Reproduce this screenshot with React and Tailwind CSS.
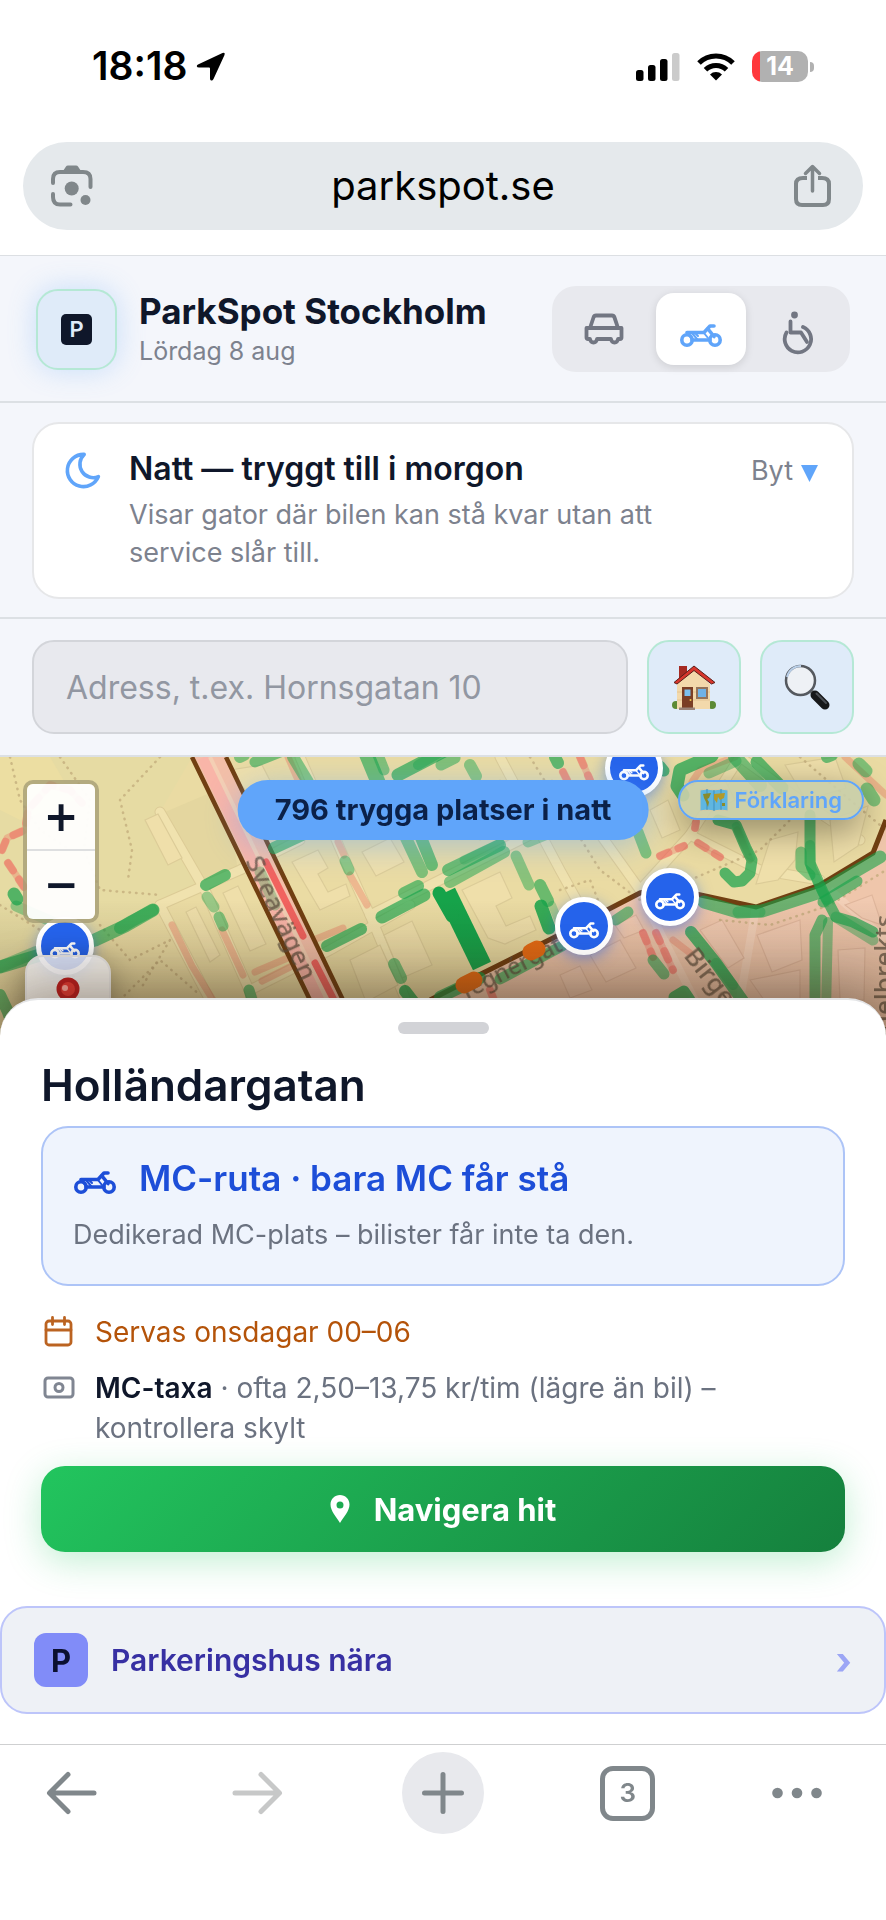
import React from "react";

const GREEN = [
  // [points, width, opacity]
  ["0,967 50,952 95,940 125,926 153,910", 13, 0.6],
  ["0,967 36,952", 12, 0.4],
  ["120,928 132,921 153,910", 12, 0.5],
  ["14,894 17,899", 13, 0.7],
  ["16,906 32,913 60,925", 11, 0.4],
  ["0,995 8,1012 14,1030", 12, 0.6],
  ["206,885 225,875", 12, 0.65],
  ["207,897 214,907", 11, 0.4],
  ["219,917 223,926", 11, 0.5],
  ["260,872 275,905", 11, 0.3],
  ["274,848 302,835", 12, 0.6],
  ["345,861 349,870", 11, 0.45],
  ["293,757 308,782", 12, 0.5],
  ["240,757 244,755", 12, 0.5],
  ["255,762 285,750", 11, 0.55],
  ["366,753 378,782", 15, 0.6],
  ["376,750 384,770", 11, 0.5],
  ["398,775 450,748", 13, 0.65],
  ["418,765 458,742", 10, 0.4],
  ["406,838 422,872", 12, 0.5],
  ["420,835 432,865", 12, 0.6],
  ["404,893 418,886", 12, 0.6],
  ["382,917 424,895", 13, 0.65],
  ["327,946 361,929", 12, 0.65],
  ["394,964 401,978", 12, 0.55],
  ["405,991 415,1004", 12, 0.8],
  ["249,990 252,1000", 11, 0.6],
  ["448,870 500,845", 12, 0.6],
  ["464,860 500,843", 9, 0.3],
  ["450,882 504,852", 12, 0.5],
  ["516,856 529,885", 11, 0.45],
  ["540,885 548,901", 12, 0.6],
  ["541,906 549,928", 13, 0.85],
  ["552,905 560,925", 8, 0.3],
  ["441,765 455,758", 11, 0.5],
  ["470,765 476,776", 12, 0.45],
  ["528,842 545,835", 11, 0.4],
  ["555,757 558,763", 12, 0.65],
  ["616,920 628,912", 11, 0.55],
  ["638,832 646,853", 11, 0.5],
  ["660,766 664,771", 11, 0.7],
  ["683,795 677,786 680,770 712,756", 13, 0.7],
  ["709,773 736,761", 11, 0.4],
  ["735,757 760,785", 14, 0.55],
  ["757,762 782,788", 13, 0.65],
  ["827,757 832,755", 12, 0.6],
  ["859,764 866,771", 13, 0.5],
  ["867,789 874,800", 13, 0.5],
  ["718,820 736,825 746,848 752,860 750,873 742,881 734,882 725,873", 11, 0.7],
  ["736,826 751,858", 8, 0.25],
  ["810,815 810,863 823,892 836,917 853,922 873,932", 11, 0.65],
  ["810,845 811,868 826,900", 10, 0.35],
  ["801,852 801,867 810,875", 11, 0.5],
  ["704,902 738,912 762,911 820,892 880,857", 13, 0.6],
  ["738,912 760,912", 11, 0.4],
  ["823,902 857,881", 11, 0.6],
  ["836,917 873,940", 11, 0.4],
  ["822,920 815,935 815,1010", 11, 0.6],
  ["828,922 826,1010", 10, 0.45],
  ["691,932 716,963 745,1004", 12, 0.7],
  ["716,963 733,985", 10, 0.3],
  ["653,960 664,974", 11, 0.55],
  ["674,997 684,991 690,1000", 11, 0.75],
  ["500,979 562,946", 11, 0.6],
  ["440,997 480,978", 12, 0.7],
];

const RED = [
  "24,887 8,863",
  "2,850 7,838 25,830 28,810 50,785 70,790 82,803",
  "695,828 696,822",
  "660,856 684,846",
  "698,843 720,857",
  "643,933 653,957",
  "656,933 673,970",
  "490,990 494,1000",
  "580,757 590,780",
  "563,772 568,782",
];

const SALMON = [
  "172,925 192,966 213,1000",
  "222,930 243,975",
  "338,842 344,855",
  "350,875 367,905",
  "255,972 290,957",
  "262,981 290,967",
  "316,939 343,928",
  "288,757 298,780",
  "692,782 700,770 735,757",
  "673,940 690,953",
  "737,830 750,860",
  "845,757 886,795",
];

const PALE_ROADS = [
  "160,812 205,890 250,992 256,1010",
  "160,905 240,870 300,840",
  "160,905 215,1010",
  "300,757 345,860 370,915 410,1010",
  "370,915 440,880 560,820",
  "250,990 330,950 410,905",
  "500,757 560,870 610,960",
  "590,820 640,890",
  "640,890 690,835 740,757",
  "690,835 760,870 820,880",
  "740,757 800,800 860,840",
];

const BUILDINGS = [
  "145,820 158,814 182,858 168,865",
  "186,912 196,907 220,955 210,962",
  "223,893 238,886 266,944 250,951",
  "292,862 318,850 328,868 318,874 328,892 346,884 350,896 320,910",
  "362,852 390,838 404,862 376,876",
  "350,960 380,945 398,985 366,1002",
  "384,935 412,921 432,965 402,978",
  "462,890 500,872 512,898 496,906 506,926 530,916 536,930 505,944 488,938",
  "460,800 500,780 520,822 480,840",
  "400,795 440,780 452,802 415,820",
  "530,790 552,780 570,830 555,838",
  "650,810 668,800 680,830 662,838",
  "700,790 725,780 735,800 712,812",
  "770,840 798,832 795,860 778,880 756,884",
  "830,820 868,806 858,846 834,862",
  "785,765 835,757 846,788 806,800",
  "230,770 262,765 280,800 262,812",
];

const PINK_BUILDINGS = [
  "590,955 620,940 636,968 606,982",
  "560,975 580,966 592,990 570,998",
  "615,925 636,915 644,930 624,938",
  "700,930 722,920 744,958 728,968",
  "757,935 800,920 802,960 772,972",
  "750,980 800,970 800,1000 764,1000",
  "845,905 872,895 882,925 862,918",
  "838,950 865,948 864,1000 840,1000",
];

const DOTS = [
  "10,757 20,800 40,830 70,850",
  "60,757 90,800 84,850 100,890 160,895",
  "160,757 120,800 132,850 128,880",
  "100,925 130,960 170,940 140,990",
  "120,1000 160,960 200,995",
  "0,905 40,930 80,985",
  "530,757 600,870 640,900",
  "560,890 590,880 600,905",
  "720,920 770,925 830,905 886,870",
  "690,880 760,850 790,820",
  "800,757 850,800 886,830",
];

const lines = (list, props) =>
  list.map((p) => (
    <polyline key={p} points={p} fill="none" strokeLinecap="round" strokeLinejoin="round" {...props} />
  ));

function StreetMap() {
  return (
    <svg
      className="absolute inset-0 size-full"
      viewBox="0 757 886 290"
      preserveAspectRatio="xMidYMin slice"
      aria-hidden="true"
      fontFamily="Noto Sans, sans-serif"
    >
      <defs>
        <linearGradient id="edge" x1="0" y1="900" x2="0" y2="1010" gradientUnits="userSpaceOnUse">
          <stop offset="0" stopColor="#2a1a08" stopOpacity="0" />
          <stop offset="1" stopColor="#2a1a08" stopOpacity="0.24" />
        </linearGradient>
      </defs>
      <rect x="0" y="757" width="886" height="290" fill="#eadba3" />
      <path d="M0 757H192L160 812L205 890L160 905L120 925L0 975Z" fill="#e6dba3" />
      <path d="M0 757H50L75 800L20 820L0 810Z" fill="#ecdea2" />
      <path d="M165 812L200 890L238 872L226 790L205 795Z" fill="#e4d69f" />
      {lines(PALE_ROADS, { stroke: "#dccb96", strokeWidth: 11 })}
      {lines(PALE_ROADS, { stroke: "#f0e2ae", strokeWidth: 9 })}
      {BUILDINGS.map((p) => (
        <polygon key={p} points={p} fill="#efdfaa" stroke="#dccc98" strokeWidth="1.2" />
      ))}
      <path
        d="M430 1000L483 973L553 938L640 893L670 887L696 894L756 907L820 885L873 853L886 820V1047H430Z"
        fill="#efc6ab"
      />
      <path d="M640 893L700 1010M756 907L740 1000M830 890L886 940" stroke="#f3d0b8" strokeWidth="8" fill="none" />
      {PINK_BUILDINGS.map((p) => (
        <polygon key={p} points={p} fill="#f1cab1" stroke="#e0b79d" strokeWidth="1.2" />
      ))}
      {lines(DOTS, { stroke: "#bfa877", strokeWidth: 2.5, strokeDasharray: "0.5 6", opacity: 0.7 })}
      <path d="M192 757L226 757L342 998L360 1040H330L309 998Z" fill="#f3bfa8" />
      <path d="M204 757L322 1002" stroke="#f9b5a8" strokeWidth="14" fill="none" />
      <path d="M210 757L330 1006" stroke="#f4cfb4" strokeWidth="4" fill="none" />
      {lines(SALMON, { stroke: "#e8866a", strokeWidth: 7, opacity: 0.45 })}
      {lines(RED, { stroke: "#ef5f58", strokeWidth: 8, strokeDasharray: "9 11", opacity: 0.45 })}
      {lines(RED, { stroke: "#ef5f58", strokeWidth: 7, opacity: 0.3 })}
      {lines(["266,862 303,936", "315,963 336,1004"], { stroke: "#f05252", strokeWidth: 7, opacity: 0.85 })}
      <path d="M192 757L309 998L320 1020M226 757L342 998L352 1020" stroke="#713f12" strokeWidth="4.5" fill="none" />
      <path
        d="M430 1000L483 973L553 938L640 893L670 887L696 894L756 907L820 885L873 853L886 820"
        stroke="#713f12"
        strokeWidth="5"
        fill="none"
      />
      {GREEN.map(([p, w, o]) => (
        <polyline
          key={p}
          points={p}
          fill="none"
          stroke="#16a34a"
          strokeWidth={w}
          opacity={o}
          strokeLinecap="round"
          strokeLinejoin="round"
        />
      ))}
      <g fill="#5f5040" fontSize="26" fontWeight="500" opacity="0.75">
        <text transform="translate(245 861) rotate(65)">Sveavägen</text>
        <text transform="translate(464 1001) rotate(-27)" fontSize="23">Tegnérgat</text>
        <text transform="translate(683 956) rotate(52)">Birger</text>
        <text transform="translate(893 1062) rotate(-90)">Engelbrekts</text>
      </g>
      <path d="M446 892L482 966" stroke="#16a34a" strokeWidth="20" strokeLinejoin="round" />
      <path d="M439 893L452 916" stroke="#16a34a" strokeWidth="13" strokeLinecap="round" />
      <path d="M531 952L537 949M464 985L474 980" stroke="#ea6c14" strokeWidth="17" strokeLinecap="round" />
      <rect x="0" y="900" width="886" height="147" fill="url(#edge)" />
    </svg>
  );
}

function MotoIcon({ className }) {
  return (
    <svg
      className={className}
      viewBox="0 0 42 24"
      fill="none"
      stroke="currentColor"
      strokeWidth="3.6"
      strokeLinecap="round"
      strokeLinejoin="round"
      aria-hidden="true"
    >
      <circle cx="7" cy="17" r="5.2" />
      <circle cx="35" cy="17" r="5.2" />
      <path d="M7 9.500H24L30 3H34" />
      <path d="M28 6L34 13.500" />
      <path d="M12 17H30" />
      <path d="M7 9.500L12 16" strokeWidth="2.500" />
      <path d="M12 10L17 16M15 10L18 13M24 10L28 15" strokeWidth="2" />
    </svg>
  );
}

function CarIcon() {
  return (
    <svg
      className="h-8 w-10"
      viewBox="0 0 40 32"
      fill="none"
      stroke="currentColor"
      strokeWidth="3.8"
      strokeLinejoin="round"
      strokeLinecap="round"
      aria-hidden="true"
    >
      <path d="M6 15L9.500 4.500Q10.200 2.500 12 2.500H28Q29.800 2.500 30.500 4.500L34 15" />
      <path d="M2.500 15H37.500V24.500Q37.500 26 36 26H34Q33.500 29.500 30.500 29.500Q27.500 29.500 27 26H13Q12.500 29.500 9.500 29.500Q6.500 29.500 6 26H4Q2.500 26 2.500 24.500Z" />
    </svg>
  );
}

function WheelchairIcon() {
  return (
    <svg
      className="h-11 w-8"
      viewBox="0 0 32 44"
      fill="none"
      stroke="currentColor"
      strokeWidth="3.8"
      strokeLinecap="round"
      strokeLinejoin="round"
      aria-hidden="true"
    >
      <circle cx="12.500" cy="4" r="3.400" fill="currentColor" stroke="none" />
      <path d="M8.500 10.500V21.500H19L25 31" />
      <path d="M4.500 21.500A13.200 13.200 0 1 0 21 16" />
    </svg>
  );
}

function MoonIcon() {
  return (
    <svg
      className="size-[43px] shrink-0 text-[#60a5fa]"
      viewBox="0 0 24 24"
      fill="none"
      stroke="currentColor"
      strokeWidth="2"
      strokeLinecap="round"
      strokeLinejoin="round"
      aria-hidden="true"
    >
      <path d="M12 3c.132 0 .263 0 .393 0a7.500 7.500 0 0 0 7.920 12.446a9 9 0 1 1 -8.313 -12.454z" />
    </svg>
  );
}

function HouseIcon() {
  return (
    <svg className="h-[46px] w-11" viewBox="0 0 44 46" aria-hidden="true">
      <circle cx="4" cy="41" r="4" fill="#5c8a35" />
      <circle cx="40" cy="41" r="4" fill="#5c8a35" />
      <path d="M7 2H15V12L7 18Z" fill="#a52a22" />
      <path d="M5 20L22 5L38 20V45H5Z" fill="#f3d9ab" />
      <path d="M5 28H38M5 36H38" stroke="#e4c493" strokeWidth="1" />
      <path d="M2 18.500L22 2L43 18.500L39.500 20L22 6.500L5 20Z" fill="#d8362c" stroke="#5b1d18" strokeWidth="1" />
      <path d="M10 23H21V44H10Z" fill="#7b3f25" />
      <path d="M12.500 25.500H18.500V32H12.500Z" fill="#7cc0ee" />
      <circle cx="18.500" cy="36" r="1" fill="#f2c94c" />
      <path d="M25 24H35V34H25Z" fill="#6fb2e6" stroke="#94745a" strokeWidth="2" />
      <path d="M7 43.500H23V46H7Z" fill="#9a8478" />
    </svg>
  );
}

function MagnifierIcon() {
  return (
    <svg className="size-[46px]" viewBox="0 0 46 46" aria-hidden="true">
      <path d="M26 26L32 32" stroke="#8c8f94" strokeWidth="4" />
      <path d="M31 31L41 41" stroke="#17181a" strokeWidth="9" strokeLinecap="round" />
      <path d="M32.500 29.500L42 39" stroke="#4b4e53" strokeWidth="2" strokeLinecap="round" />
      <circle cx="16.500" cy="16.500" r="14.500" fill="#eef1f5" stroke="#55595f" strokeWidth="2.500" />
      <path d="M3 13A14 14 0 0 1 17 2" stroke="#b9cfe8" strokeWidth="2" fill="none" />
    </svg>
  );
}

function WorldMapIcon() {
  return (
    <svg className="h-6 w-7" viewBox="0 0 28 24" aria-hidden="true">
      <path d="M0 2L7 1L14 2L21 1L28 2V23L21 22L14 23L7 22L0 23Z" fill="#5fb6e0" stroke="#d9c9a0" strokeWidth="1" />
      <path d="M7 1V22M14 2V23M21 1V22" stroke="#3f8fbd" strokeWidth="1" />
      <path d="M3 6L11 5L9 10L7 11L9 14L8 19L6 14L4 10Z" fill="#8a8b2c" />
      <path d="M14 6L25 5L24 10L20 12L18 9L17 15L14 11Z" fill="#b39a2a" />
      <path d="M22 15H25V18H22Z" fill="#8a8b2c" />
    </svg>
  );
}

function Marker({ className }) {
  return (
    <div
      className={`absolute flex size-[58px] items-center justify-center rounded-full border-5 border-white bg-[#2563eb] pt-2 text-white shadow-[0_4px_14px_rgba(37,99,235,0.5)] ${className}`}
    >
      <MotoIcon className="h-[18px] w-[30px]" />
    </div>
  );
}

function StatusBar() {
  return (
    <div className="flex h-[142px] items-start justify-between pt-[43px] pr-[72px] pl-[92px]">
      <div className="flex items-center gap-2">
        <span className="text-[39px] leading-[46px] font-semibold text-black">18:18</span>
        <svg className="size-8" viewBox="0 0 32 32" aria-hidden="true">
          <path
            d="M3 14.500L27.500 3Q30.500 2 29.500 5L18.500 29Q17.500 31 16 30.500Q15 30 15 28.500V18.500Q15 17.500 14 17.500H4Q2 17.500 1.800 16.300Q1.700 15.200 3 14.500Z"
            fill="#000"
          />
        </svg>
      </div>
      <div className="flex items-center gap-[17px] pt-2">
        <svg className="h-7 w-[44px]" viewBox="0 0 44 28" aria-hidden="true">
          <rect x="0" y="17" width="7.500" height="11" rx="2.500" />
          <rect x="12" y="12" width="7.500" height="16" rx="2.500" />
          <rect x="24" y="6" width="7.500" height="22" rx="2.500" />
          <rect x="36" y="0" width="7.500" height="28" rx="2.500" fill="#cbcbcb" />
        </svg>
        <svg className="h-7 w-[38px]" viewBox="0 0 38 28" aria-hidden="true" fill="none" stroke="#000" strokeWidth="5">
          <path d="M2 10A24 24 0 0 1 36 10" />
          <path d="M8.500 16.800A15 15 0 0 1 29.500 16.800" />
          <path d="M19 27.500L13 21.500A8.500 8.500 0 0 1 25 21.500Z" fill="#000" stroke="none" />
        </svg>
        <div className="flex items-center gap-[2px]">
          <div className="flex h-[31px] w-[56px] items-center justify-center rounded-[10px] bg-[linear-gradient(90deg,#ff383c_8px,#b1b1b1_8px)] text-[25px] leading-none font-bold text-white">
            14
          </div>
          <div className="h-[10px] w-1 rounded-r-full bg-[#b1b1b1]" />
        </div>
      </div>
    </div>
  );
}

function AddressBar() {
  return (
    <div className="border-b border-[#dcdfe3] px-[23px] pb-[25px]">
      <div className="flex h-[88px] items-center justify-between rounded-full bg-[#e5e9ec] px-7 text-[#80878a]">
        <button type="button" aria-label="Sök med kameran">
          <svg className="size-[42px]" viewBox="0 0 42 42" fill="none" stroke="currentColor" strokeWidth="4" strokeLinecap="round" aria-hidden="true">
            <path d="M2 18V14Q2 7 9 7H32Q39.500 7 39.500 14V22" />
            <path d="M2 29V32Q2 39.500 9 39.500H19.500" />
            <path d="M12 6L15 1.500Q15.500 .500 17 .500H25Q26.500 .500 27 1.500L30 6V8H12Z" fill="currentColor" stroke="none" />
            <circle cx="20.700" cy="23.500" r="7" fill="currentColor" stroke="none" />
            <circle cx="34.500" cy="35" r="5" fill="currentColor" stroke="none" />
          </svg>
        </button>
        <span className="text-[40px] leading-[48px] text-black">parkspot.se</span>
        <button type="button" aria-label="Dela">
          <svg className="h-[44px] w-[42px]" viewBox="0 0 42 44" fill="none" stroke="currentColor" strokeWidth="4" strokeLinejoin="round" aria-hidden="true">
            <path d="M14 14H10Q3 14 3 20V35Q3 41 9 41H30Q36 41 36 35V20Q36 14 29 14H25" />
            <path d="M19.500 27V4M12.500 9.500L19.500 2.500L26.500 9.500" strokeWidth="3.500" strokeLinecap="round" />
          </svg>
        </button>
      </div>
    </div>
  );
}

function AppHeader() {
  const tab = "flex h-[72px] w-[90px] items-center justify-center rounded-[18px]";
  return (
    <header className="flex items-center justify-between border-b-2 border-[#dce0e4] px-9 pt-[30px] pb-[29px]">
      <div className="flex items-center gap-[22px]">
        <div className="flex size-[81px] items-center justify-center rounded-[22px] border-2 border-[#b5e8d5] bg-[#dfebf9] shadow-[0_0_28px_rgba(96,165,250,0.3)]">
          <span className="flex size-[31px] items-center justify-center rounded-[5px] bg-[#0f172a] text-[22px] leading-none font-semibold text-[#dfebf9]">
            P
          </span>
        </div>
        <div>
          <h1 className="text-[35px] leading-[44px] font-bold text-[#0f172a]">ParkSpot Stockholm</h1>
          <p className="text-[25px] leading-[36px] text-[#7d828e]">Lördag 8 aug</p>
        </div>
      </div>
      <div className="flex gap-[7px] rounded-3xl bg-[#e8e9ee] p-[7px] text-[#727682]">
        <button type="button" aria-label="Bil" className={tab}>
          <CarIcon />
        </button>
        <button
          type="button"
          aria-label="MC"
          aria-pressed="true"
          className="flex h-[72px] w-[90px] items-center justify-center rounded-[18px] bg-white pt-3 text-[#60a5fa] shadow-[0_2px_8px_rgba(0,0,0,0.12)]"
        >
          <MotoIcon className="h-6 w-[42px]" />
        </button>
        <button type="button" aria-label="Rörelsehindrad" className="flex h-[72px] w-[90px] items-center justify-center rounded-[18px] pt-2">
          <WheelchairIcon />
        </button>
      </div>
    </header>
  );
}

function ModeCard() {
  return (
    <section className="border-b-2 border-[#dce0e4] px-8 pt-[19px] pb-[18px]">
      <button
        type="button"
        className="flex w-full items-start gap-6 rounded-[27px] border-2 border-[#e6e7e9] bg-white py-[25px] pr-[34px] pl-7 text-left"
      >
        <MoonIcon />
        <span className="flex-1">
          <span className="block text-[32px] leading-[40px] font-semibold text-[#0f172a]">Natt — tryggt till i morgon</span>
          <span className="mt-[7px] block max-w-[550px] text-[27px] leading-[38px] text-[#7d828e]">
            Visar gator där bilen kan stå kvar utan att service slår till.
          </span>
        </span>
        <span className="flex items-center gap-2 text-[27px] leading-[44px] text-[#7d828e]">
          Byt
          <svg className="mt-1 size-[17px]" viewBox="0 0 17 17" aria-hidden="true">
            <path d="M0 0H17L8.500 17Z" fill="#60a5fa" />
          </svg>
        </span>
      </button>
    </section>
  );
}

function SearchRow() {
  const square =
    "flex size-[94px] shrink-0 items-center justify-center rounded-[22px] border-2 border-[#b5e8d5] bg-[#dfebf9]";
  return (
    <form className="flex gap-[19px] border-b-2 border-[#dce0e4] px-8 py-[21px]">
      <input
        type="text"
        aria-label="Adress"
        placeholder="Adress, t.ex. Hornsgatan 10"
        className="h-[94px] min-w-0 flex-1 rounded-[22px] border-2 border-[#d3d5da] bg-[#e8e9ee] px-8 text-[32px] text-[#0f172a] placeholder:text-[#9297a2]"
      />
      <button type="button" aria-label="Hem" className={square}>
        <HouseIcon />
      </button>
      <button type="button" aria-label="Sök" className={square}>
        <MagnifierIcon />
      </button>
    </form>
  );
}

function MapView() {
  return (
    <section className="relative h-[290px] overflow-hidden" aria-label="Karta">
      <StreetMap />
      <Marker className="top-[160px] left-[36px]" />
      <Marker className="top-[140px] left-[555px]" />
      <Marker className="top-[111px] left-[641px]" />
      <Marker className="top-[-18px] left-[605px]" />
      <div className="absolute top-[23px] left-[23px] flex flex-col overflow-hidden rounded-[10px] border-4 border-[#a69d76]/80 text-[#0f172a]">
        <button
          type="button"
          aria-label="Zooma in"
          className="h-[67px] w-[68px] border-b-2 border-[#dedfe0] bg-white/95 font-['DejaVu_Sans'] text-[42px] leading-none font-bold"
        >
          +
        </button>
        <button
          type="button"
          aria-label="Zooma ut"
          className="h-[68px] w-[68px] bg-white/95 font-['DejaVu_Sans'] text-[42px] leading-none font-bold"
        >
          −
        </button>
      </div>
      <div className="absolute top-[23px] left-1/2 -translate-x-1/2 rounded-full bg-[#60a5fa] px-[37px] text-[29px] leading-[60px] font-bold whitespace-nowrap text-[#0b2149] shadow-[0_6px_32px_rgba(96,165,250,0.45)]">
        796 trygga platser i natt
      </div>
      <button
        type="button"
        className="absolute top-[23px] right-[22px] flex h-10 items-center gap-[6px] rounded-full border-2 border-[#60a5fa] bg-[#c9ceaa]/90 px-5 text-[22px] leading-none font-semibold text-[#60a5fa] shadow-[0_10px_36px_rgba(0,0,0,0.4)]"
      >
        <WorldMapIcon />
        Förklaring
      </button>
      <button
        type="button"
        aria-label="Min position"
        className="absolute top-[198px] left-[25px] flex h-[88px] w-[86px] justify-center rounded-[18px] border-2 border-[#dcdad8] bg-[#ecebed]/85 pt-5 shadow-[0_6px_30px_rgba(0,0,0,0.35)]"
      >
        <svg className="size-6" viewBox="0 0 24 24" aria-hidden="true">
          <circle cx="12" cy="12" r="11.500" fill="#b41a1c" />
          <circle cx="12" cy="12" r="7" fill="#dc3530" />
          <circle cx="9" cy="11" r="3" fill="#f7a198" />
        </svg>
      </button>
    </section>
  );
}

function SpotSheet() {
  return (
    <section className="relative -mt-[49px] rounded-t-[38px] border-t-2 border-[#e3e4e6] bg-white pt-[22px] pb-[30px] shadow-[0_-8px_60px_rgba(60,40,20,0.45)]">
      <div className="mx-auto h-3 w-[91px] rounded-full bg-[#d2d3d7]" />
      <div className="px-[41px]">
        <h2 className="mt-[24px] text-[44px] leading-[54px] font-semibold text-[#0f172a]">Holländargatan</h2>
        <div className="mt-[14px] rounded-[27px] border-2 border-[#adc4f7] bg-[#eff4fd] px-[30px] pt-7 pb-[29px]">
          <div className="flex items-center gap-[22px] text-[#1d4ed8]">
            <MotoIcon className="mt-2 h-6 w-[44px]" />
            <h3 className="text-[35px] leading-[44px] font-semibold">MC-ruta · bara MC får stå</h3>
          </div>
          <p className="mt-[15px] text-[27px] leading-[40px] text-[#6b7280]">Dedikerad MC-plats – bilister får inte ta den.</p>
        </div>
        <ul className="mt-[26px] flex flex-col gap-4 text-[28px] leading-[40px]">
          <li className="flex gap-5 text-[#b45309]">
            <svg className="mt-[3px] h-8 w-[34px] shrink-0" viewBox="0 0 34 32" fill="none" stroke="currentColor" strokeWidth="2.800" strokeLinecap="round" strokeLinejoin="round" opacity="0.9" aria-hidden="true">
              <rect x="5" y="6" width="25" height="24" rx="3" />
              <path d="M5 15H30M11.500 2.500V9.500M23.500 2.500V9.500" />
            </svg>
            <span>Servas onsdagar 00–06</span>
          </li>
          <li className="flex gap-5 text-[#6b7280]">
            <svg className="mt-[3px] h-8 w-[34px] shrink-0" viewBox="0 0 34 32" fill="none" stroke="currentColor" strokeWidth="3" opacity="0.85" aria-hidden="true">
              <rect x="4" y="7" width="28" height="19" rx="3" />
              <circle cx="18" cy="16.500" r="4" />
            </svg>
            <span className="max-w-[660px]">
              <strong className="font-semibold text-[#0f172a]">MC-taxa</strong> · ofta 2,50–13,75 kr/tim (lägre än bil) –
              kontrollera skylt
            </span>
          </li>
        </ul>
        <button
          type="button"
          className="mt-[18px] flex h-[86px] w-full items-center justify-center gap-6 rounded-3xl bg-linear-135 from-[#22c55e] to-[#15803d] text-[31px] leading-none font-bold text-white shadow-[0_9px_36px_rgba(34,197,94,0.28)]"
        >
          <svg className="h-[30px] w-[20px]" viewBox="0 0 20 30" fill="currentColor" aria-hidden="true">
            <path
              fillRule="evenodd"
              d="M10 1C4.800 1 .500 5 .500 10.500C.500 17 6.500 23 10 29C13.500 23 19.500 17 19.500 10.500C19.500 5 15.200 1 10 1ZM10 7.500A3.500 3.500 0 1 1 10 14.500A3.500 3.500 0 1 1 10 7.500Z"
            />
          </svg>
          Navigera hit
        </button>
      </div>
      <button
        type="button"
        className="mt-[54px] flex h-[108px] w-full items-center rounded-[27px] border-2 border-[#bdc5fa] bg-[#eef1f6] px-8"
      >
        <span className="flex size-[54px] items-center justify-center rounded-xl bg-[#818cf8] text-[31px] leading-none font-bold text-[#0b1030]">
          P
        </span>
        <span className="ml-[23px] text-[30px] leading-none font-semibold text-[#3730a3]">Parkeringshus nära</span>
        <span className="ml-auto text-[38px] leading-none font-bold text-[#9ca6f5]">›</span>
      </button>
    </section>
  );
}

function BrowserToolbar() {
  const stroke = {
    className: "h-[44px] w-[52px]",
    viewBox: "0 0 52 44",
    fill: "none",
    stroke: "currentColor",
    strokeWidth: 5,
    strokeLinecap: "round",
    strokeLinejoin: "round",
    "aria-hidden": true,
  };
  const item = "flex size-[82px] items-center justify-center rounded-full";
  return (
    <nav className="relative flex items-center justify-between border-t border-[#cfd0d1] bg-white pt-[7px] pr-16 pb-[86px] pl-[31px] text-[#80878b]">
      <button type="button" aria-label="Tillbaka" className={item}>
        <svg {...stroke}>
          <path d="M48 22H4M22 3.500L3.500 22L22 40.500" />
        </svg>
      </button>
      <button type="button" aria-label="Framåt" className="flex size-[82px] items-center justify-center rounded-full text-[#c7c8c8]">
        <svg {...stroke}>
          <path d="M4 22H48M30 3.500L48.500 22L30 40.500" />
        </svg>
      </button>
      <button type="button" aria-label="Ny flik" className="flex size-[82px] items-center justify-center rounded-full bg-[#e8e9ed]">
        <svg {...stroke}>
          <path d="M26 3.500V40.500M7.500 22H44.500" />
        </svg>
      </button>
      <button type="button" aria-label="Flikar" className={item}>
        <span className="flex size-[55px] items-center justify-center rounded-[13px] border-5 border-[#80878b] text-[26px] leading-none font-semibold">
          3
        </span>
      </button>
      <button type="button" aria-label="Mer">
        <svg className="h-[44px] w-[50px]" viewBox="0 0 50 44" fill="currentColor" aria-hidden="true">
          <circle cx="5.500" cy="22" r="5.300" />
          <circle cx="25" cy="22" r="5.300" />
          <circle cx="44.500" cy="22" r="5.300" />
        </svg>
      </button>
    </nav>
  );
}

export default function App() {
  return (
    <div className="min-h-screen w-full overflow-hidden bg-white font-['Inter',sans-serif]">
      <StatusBar />
      <AddressBar />
      <main>
        <div className="bg-[#f4f6fb]">
          <AppHeader />
          <ModeCard />
          <SearchRow />
        </div>
        <MapView />
        <SpotSheet />
      </main>
      <BrowserToolbar />
    </div>
  );
}
